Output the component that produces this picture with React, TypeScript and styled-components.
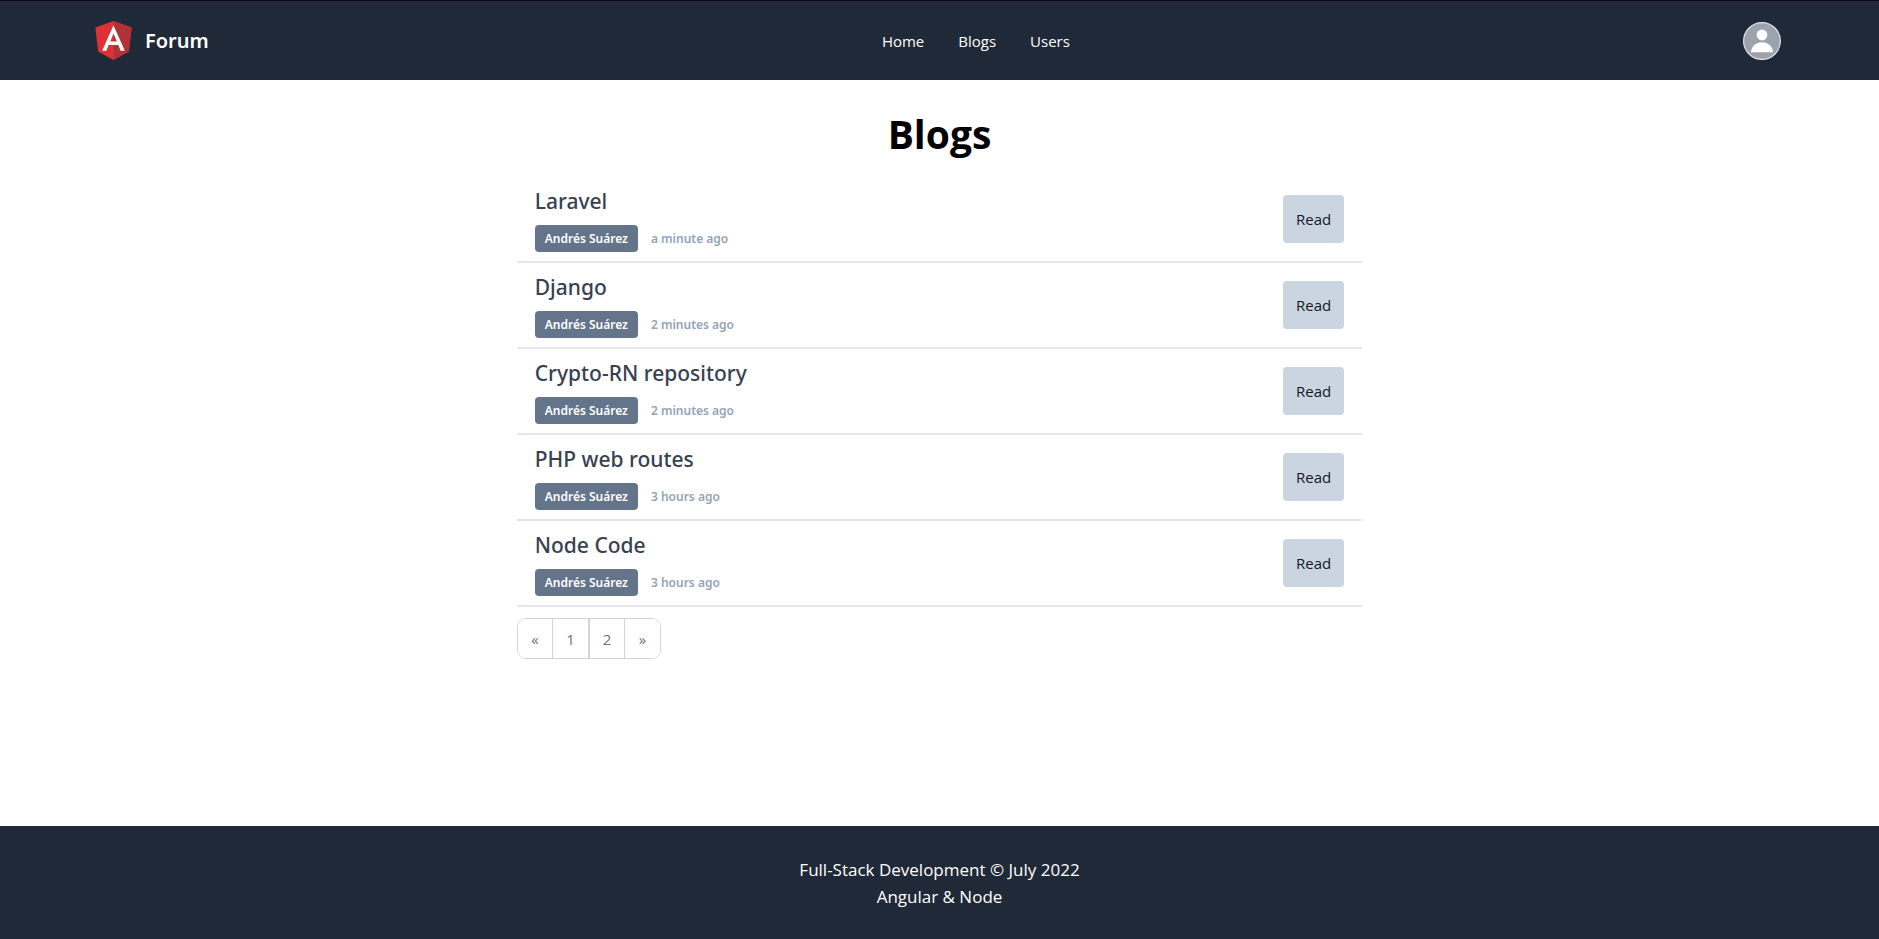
import React from "react";
import styled, { createGlobalStyle } from "styled-components";

const GlobalStyle = createGlobalStyle`
  *, *::before, *::after { box-sizing: border-box; }
  body {
    margin: 0;
    background: #ffffff;
    font-family: "Segoe UI", "Open Sans", "Noto Sans", sans-serif;
    color: #000000;
  }
  h1, h2, p, ul { margin: 0; padding: 0; }
  ul { list-style: none; }
  a { color: inherit; text-decoration: none; }
  button { font-family: inherit; cursor: pointer; }
`;

const Page = styled.div`
  min-height: 100vh;
  display: flex;
  flex-direction: column;
`;

const Header = styled.header`
  display: flex;
  align-items: center;
  justify-content: space-between;
  height: 80px;
  padding: 0 98px 0 95px;
  border-top: 1px solid #12061f;
  background: #1f2937;
  color: #ffffff;
`;

const Brand = styled.a`
  display: flex;
  align-items: center;
  gap: 13px;
  font-family: "Segoe UI", "Noto Sans", sans-serif;
  font-size: 20px;
  font-weight: 600;
  line-height: 32px;
`;

const Nav = styled.nav`
  display: flex;
  gap: 34px;
  font-size: 15px;
  line-height: 24px;
`;

const AvatarButton = styled.button`
  width: 38px;
  height: 38px;
  padding: 0;
  border: 0;
  border-radius: 50%;
  background: none;

  svg { display: block; }
`;

const Main = styled.main`
  flex: 1;
  width: 45%;
  margin: 0 auto;
  padding: 24px 0;
`;

const Heading = styled.h1`
  margin-bottom: 13px;
  font-size: 39px;
  font-weight: 700;
  line-height: 60px;
  text-align: center;
`;

const BlogRow = styled.li`
  display: flex;
  align-items: center;
  justify-content: space-between;
  padding: 8px 18px;
  border-bottom: 2px solid #e5e7eb;
`;

const BlogTitle = styled.h2`
  margin-bottom: 7px;
  font-family: "Segoe UI", "Noto Sans", sans-serif;
  font-size: 21px;
  font-weight: 500;
  line-height: 33px;
  color: #374151;
`;

const Meta = styled.div`
  display: flex;
  align-items: center;
  gap: 13px;
  margin-bottom: 1px;
  font-family: "Segoe UI", "Noto Sans", sans-serif;
  font-size: 12px;
  font-weight: 600;
  line-height: 27px;
`;

const Author = styled.span`
  padding: 0 10px;
  border-radius: 4px;
  background: #64748b;
  color: #ffffff;
`;

const Time = styled.span`
  color: #94a3b8;
`;

const ReadButton = styled.button`
  height: 48px;
  padding: 0 13px;
  border: 0;
  border-radius: 4px;
  background: #cbd5e1;
  color: #111827;
  font-size: 15px;
  font-weight: 500;
`;

const Pagination = styled.nav`
  display: flex;
  width: 144px;
  margin-top: 11px;
  border: 1px solid #d1d5db;
  border-radius: 9px;
  overflow: hidden;
`;

const PageButton = styled.button<{ $divider?: number }>`
  flex: 1;
  height: 39px;
  padding: 0;
  border: 0;
  border-right: ${(p) => p.$divider ?? 0}px solid #d1d5db;
  background: #ffffff;
  color: #6b7280;
  font-size: 15px;
  font-weight: 500;
`;

const Footer = styled.footer`
  padding: 30px 0 29px;
  background: #1f2937;
  color: #ffffff;
  font-size: 17px;
  line-height: 27px;
  text-align: center;
`;

const AngularLogo = () => (
  <svg width="37" height="39" viewBox="31 30 188 200" aria-hidden="true">
    <polygon fill="#dd3137" points="125,30 31.9,63.2 46.1,186.3 125,230 203.9,186.3 218.1,63.2" />
    <polygon fill="#b13138" points="125,30 125,230 203.9,186.3 218.1,63.2" />
    <path
      fill="#ffffff"
      d="M125,52.1L66.8,182.6h21.7l11.7-29.2h49.4l11.7,29.2H183L125,52.1z M142,135.4H108l17-40.9L142,135.4z"
    />
  </svg>
);

const Avatar = () => (
  <svg width="38" height="38" viewBox="0 0 38 38" aria-hidden="true">
    <circle cx="19" cy="19" r="18.4" fill="#9ca3af" stroke="#dfe1e5" strokeWidth="1.2" />
    <circle cx="19" cy="13" r="5.4" fill="#ffffff" />
    <path fill="#ffffff" d="M8 30.3C8.200 24.600 13 20.300 19 20.300S29.800 24.600 30 30.300Z" />
  </svg>
);

const blogs = [
  { title: "Laravel", author: "Andrés Suárez", time: "a minute ago" },
  { title: "Django", author: "Andrés Suárez", time: "2 minutes ago" },
  { title: "Crypto-RN repository", author: "Andrés Suárez", time: "2 minutes ago" },
  { title: "PHP web routes", author: "Andrés Suárez", time: "3 hours ago" },
  { title: "Node Code", author: "Andrés Suárez", time: "3 hours ago" },
];

export default function App() {
  return (
    <Page>
      <GlobalStyle />
      <Header>
        <Brand href="#">
          <AngularLogo />
          Forum
        </Brand>
        <Nav>
          <a href="#home">Home</a>
          <a href="#blogs">Blogs</a>
          <a href="#users">Users</a>
        </Nav>
        <AvatarButton aria-label="User menu">
          <Avatar />
        </AvatarButton>
      </Header>
      <Main>
        <Heading>Blogs</Heading>
        <ul>
          {blogs.map((blog) => (
            <BlogRow key={blog.title}>
              <div>
                <BlogTitle>{blog.title}</BlogTitle>
                <Meta>
                  <Author>{blog.author}</Author>
                  <Time>{blog.time}</Time>
                </Meta>
              </div>
              <ReadButton>Read</ReadButton>
            </BlogRow>
          ))}
        </ul>
        <Pagination aria-label="Pagination">
          <PageButton $divider={1} aria-label="Previous page">«</PageButton>
          <PageButton $divider={2}>1</PageButton>
          <PageButton $divider={1}>2</PageButton>
          <PageButton aria-label="Next page">»</PageButton>
        </Pagination>
      </Main>
      <Footer>
        <p>Full-Stack Development © July 2022</p>
        <p>Angular &amp; Node</p>
      </Footer>
    </Page>
  );
}
